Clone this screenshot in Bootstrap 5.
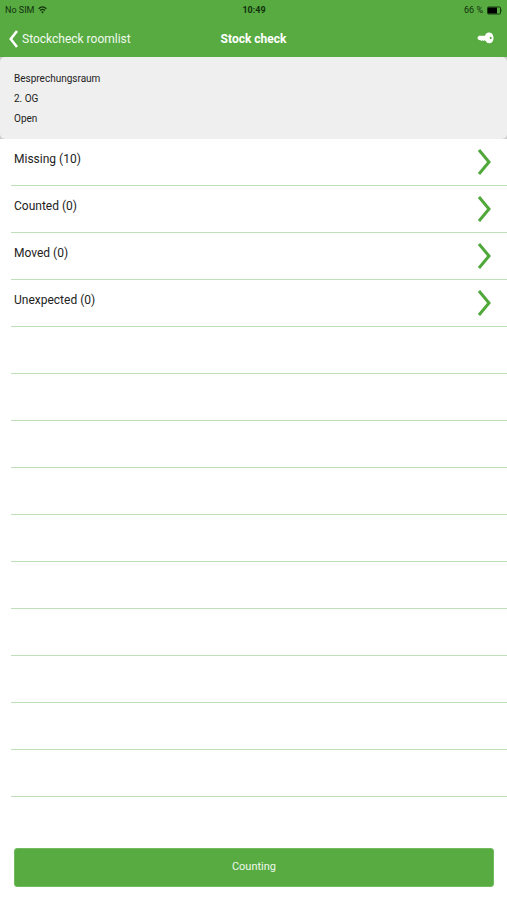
<!DOCTYPE html>
<html lang="en">
<head>
<meta charset="utf-8">
<meta name="viewport" content="width=device-width, initial-scale=1">
<title>Stock check</title>
<link href="https://cdn.jsdelivr.net/npm/bootstrap@5.3.0/dist/css/bootstrap.min.css" rel="stylesheet">
<style>
:root { --brand: #57ab41; --rule: #bfe0b8; }
body { font-family: Roboto, "Liberation Sans", sans-serif; font-size: 12px; line-height: 20px; color: #222; background: #fff; }
.top-area { background: var(--brand); }
.status-bar { font-size: 9px; line-height: 20px; color: #12300c; padding: 0 4px 0 5px; }
.clock { font-weight: 700; }
.title-bar { height: 37px; padding: 0 9px; color: #fff; }
.title-bar h1 { font-size: 12px; line-height: 20px; font-weight: 700; }
.back-link { font-size: 12px; line-height: 20px; color: #f1faee; }
.key-btn { margin: 0 4px 2px 0; }
.room-holder { background: #ccc; }
.room-info { background: #efefef; border-radius: 5px; padding: 12px 14px 10px; font-size: 10px; }
.check-list { padding-left: 11px; }
.check-list .list-group-item { height: 47px; padding: 0; border-color: var(--rule); border-width: 0 0 1px; }
.check-link { height: 46px; padding: 0 16px 0 3px; font-size: 12px; color: #222; }
.check-link span { padding-bottom: 6px; }
.check-link svg { fill: none; stroke: #50a83b; stroke-width: 3; }
.bottom-bar { padding: 13px 13px 13px 14px; }
.count-btn { --bs-btn-bg: var(--brand); --bs-btn-color: #eef8eb; --bs-btn-border-color: #71ba60; --bs-btn-hover-bg: #4b9a37; --bs-btn-hover-color: #fff; --bs-btn-border-radius: 3px; --bs-btn-font-size: 11px; height: 39px; }
</style>
</head>
<body>
<div class="d-flex flex-column min-vh-100">
  <header class="top-area">
    <div class="status-bar row g-0">
      <div class="col d-flex align-items-center gap-1">No SIM
        <svg width="9" height="8" viewBox="0 0 9 8" fill="none" stroke="currentColor" aria-hidden="true"><path d="M.6 2.7Q4.5-.8 8.4 2.7" stroke-width="1.2"/><path d="M2 4.5Q4.5 2.4 7 4.5" stroke-width="1.2"/><path d="M3.1 5.7Q4.5 4.7 5.9 5.7L4.5 7.5Z" fill="currentColor" stroke="none"/></svg>
      </div>
      <div class="col-auto clock">10:49</div>
      <div class="col d-flex align-items-center justify-content-end">66 %
        <svg class="ms-1" width="16" height="9" viewBox="0 0 16 9" aria-hidden="true"><rect x=".5" y="1" width="13" height="7" rx="1" fill="none" stroke="#163d0d"/><rect x="1" y="1.5" width="9" height="6" fill="#000"/><path d="M14.5 3q1.3 1.5 0 3z" fill="#163d0d"/></svg>
      </div>
    </div>
    <nav class="title-bar row g-0 align-items-center" aria-label="Main">
      <div class="col d-flex"><a href="#" class="back-link d-flex align-items-center gap-1 text-decoration-none text-nowrap">
        <svg width="9" height="18" viewBox="0 0 9 18" fill="none" stroke="#fff" stroke-width="2.6" aria-hidden="true"><path d="M8 1 1.8 9 8 17"/></svg>Stockcheck roomlist</a></div>
      <h1 class="col-auto m-0">Stock check</h1>
      <div class="col d-flex justify-content-end"><button type="button" class="key-btn btn d-flex p-0 border-0" aria-label="Key">
        <svg width="17" height="12" viewBox="0 0 17 12" aria-hidden="true"><path fill="#fff" fill-rule="evenodd" d="M.6 5.3 2 3.7h6Q9 .5 12 .5c2.700 0 4.500 2.200 4.500 5.400s-1.800 5.400-4.500 5.400Q9.800 11.300 8.700 9L7.500 8.200 6.500 9 5.500 8.200 4.500 9 3.500 8.200 2 8 .6 6.700ZM13.700 4.700a1 1.200 0 1 0 0 2.400 1 1.200 0 0 0 0-2.400Z"/></svg></button></div>
    </nav>
  </header>
  <section class="room-holder" aria-label="Room">
    <div class="room-info"><div>Besprechungsraum</div><div>2. OG</div><div>Open</div></div>
  </section>
  <main class="flex-grow-1">
    <ul class="check-list list-group rounded-0">
      <li class="list-group-item"><a href="#" class="check-link d-flex align-items-center justify-content-between text-decoration-none"><span>Missing (10)</span><svg width="14" height="26" viewBox="0 0 14 26" aria-hidden="true"><path d="M2 1 12 13 2 25"/></svg></a></li>
      <li class="list-group-item"><a href="#" class="check-link d-flex align-items-center justify-content-between text-decoration-none"><span>Counted (0)</span><svg width="14" height="26" viewBox="0 0 14 26" aria-hidden="true"><path d="M2 1 12 13 2 25"/></svg></a></li>
      <li class="list-group-item"><a href="#" class="check-link d-flex align-items-center justify-content-between text-decoration-none"><span>Moved (0)</span><svg width="14" height="26" viewBox="0 0 14 26" aria-hidden="true"><path d="M2 1 12 13 2 25"/></svg></a></li>
      <li class="list-group-item"><a href="#" class="check-link d-flex align-items-center justify-content-between text-decoration-none"><span>Unexpected (0)</span><svg width="14" height="26" viewBox="0 0 14 26" aria-hidden="true"><path d="M2 1 12 13 2 25"/></svg></a></li>
      <li class="list-group-item"></li><li class="list-group-item"></li><li class="list-group-item"></li><li class="list-group-item"></li><li class="list-group-item"></li>
      <li class="list-group-item"></li><li class="list-group-item"></li><li class="list-group-item"></li><li class="list-group-item"></li><li class="list-group-item"></li>
    </ul>
  </main>
  <footer class="bottom-bar"><button type="button" class="count-btn btn w-100 py-0">Counting</button></footer>
</div>
<script src="https://cdn.jsdelivr.net/npm/bootstrap@5.3.0/dist/js/bootstrap.bundle.min.js"></script>
</body>
</html>
